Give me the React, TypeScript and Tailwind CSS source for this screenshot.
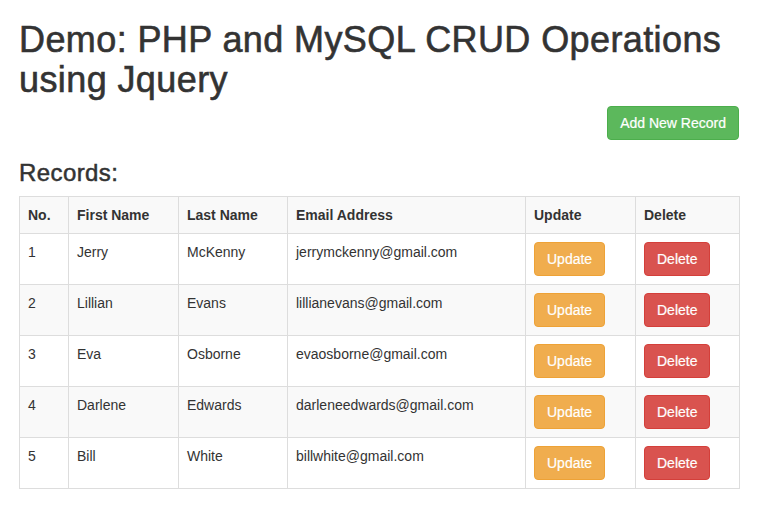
import React from "react";

const rows = [
  { no: 1, first: "Jerry", last: "McKenny", email: "jerrymckenny@gmail.com" },
  { no: 2, first: "Lillian", last: "Evans", email: "lillianevans@gmail.com" },
  { no: 3, first: "Eva", last: "Osborne", email: "evaosborne@gmail.com" },
  { no: 4, first: "Darlene", last: "Edwards", email: "darleneedwards@gmail.com" },
  { no: 5, first: "Bill", last: "White", email: "billwhite@gmail.com" },
];

export default function App() {
  return (
    <div
      className="min-h-[514px] bg-white text-[#333] text-[14px] leading-[20px]"
      style={{ fontFamily: '"Liberation Sans", Arial, Helvetica, sans-serif' }}
    >
      <div className="w-[720px] ml-[19px]">
        <h1 className="mt-[20px] text-[36px] leading-[39.6px] font-normal tracking-[0.4px] [-webkit-text-stroke:0.6px_#333]">
          Demo: PHP and MySQL CRUD Operations using Jquery
        </h1>
        <div className="flex justify-end mt-[7px]">
          <button className="h-[34px] px-[12px] rounded-[4px] border border-[#4cae4c] bg-[#5cb85c] text-white text-[14px] leading-[20px] [-webkit-text-stroke:0.2px_#fff]">
            Add New Record
          </button>
        </div>
        <h3 className="mt-[20px] text-[24px] leading-[26.4px] font-normal tracking-[0.4px] [-webkit-text-stroke:0.5px_#333]">
          Records:
        </h3>
        <table className="mt-[9px] w-[720px] table-fixed border-collapse border border-[#ddd]">
          <colgroup>
            <col className="w-[49px]" />
            <col className="w-[110px]" />
            <col className="w-[109px]" />
            <col className="w-[238px]" />
            <col className="w-[110px]" />
            <col className="w-[104px]" />
          </colgroup>
          <tbody>
            <tr className="bg-[#f9f9f9]">
              {["No.", "First Name", "Last Name", "Email Address", "Update", "Delete"].map((h) => (
                <th key={h} className="border border-[#ddd] p-[8px] text-left font-bold align-top">
                  {h}
                </th>
              ))}
            </tr>
            {rows.map((r, i) => (
              <tr key={r.no} className={i % 2 === 1 ? "bg-[#f9f9f9]" : "bg-white"}>
                <td className="border border-[#ddd] p-[8px] align-top">{r.no}</td>
                <td className="border border-[#ddd] p-[8px] align-top">{r.first}</td>
                <td className="border border-[#ddd] p-[8px] align-top">{r.last}</td>
                <td className="border border-[#ddd] p-[8px] align-top">{r.email}</td>
                <td className="border border-[#ddd] p-[8px] align-top">
                  <button className="h-[34px] px-[12px] rounded-[4px] border border-[#eea236] bg-[#f0ad4e] text-white text-[14px] leading-[20px] block [-webkit-text-stroke:0.2px_#fff]">
                    Update
                  </button>
                </td>
                <td className="border border-[#ddd] p-[8px] align-top">
                  <button className="h-[34px] px-[12px] rounded-[4px] border border-[#d43f3a] bg-[#d9534f] text-white text-[14px] leading-[20px] block [-webkit-text-stroke:0.2px_#fff]">
                    Delete
                  </button>
                </td>
              </tr>
            ))}
          </tbody>
        </table>
      </div>
    </div>
  );
}
